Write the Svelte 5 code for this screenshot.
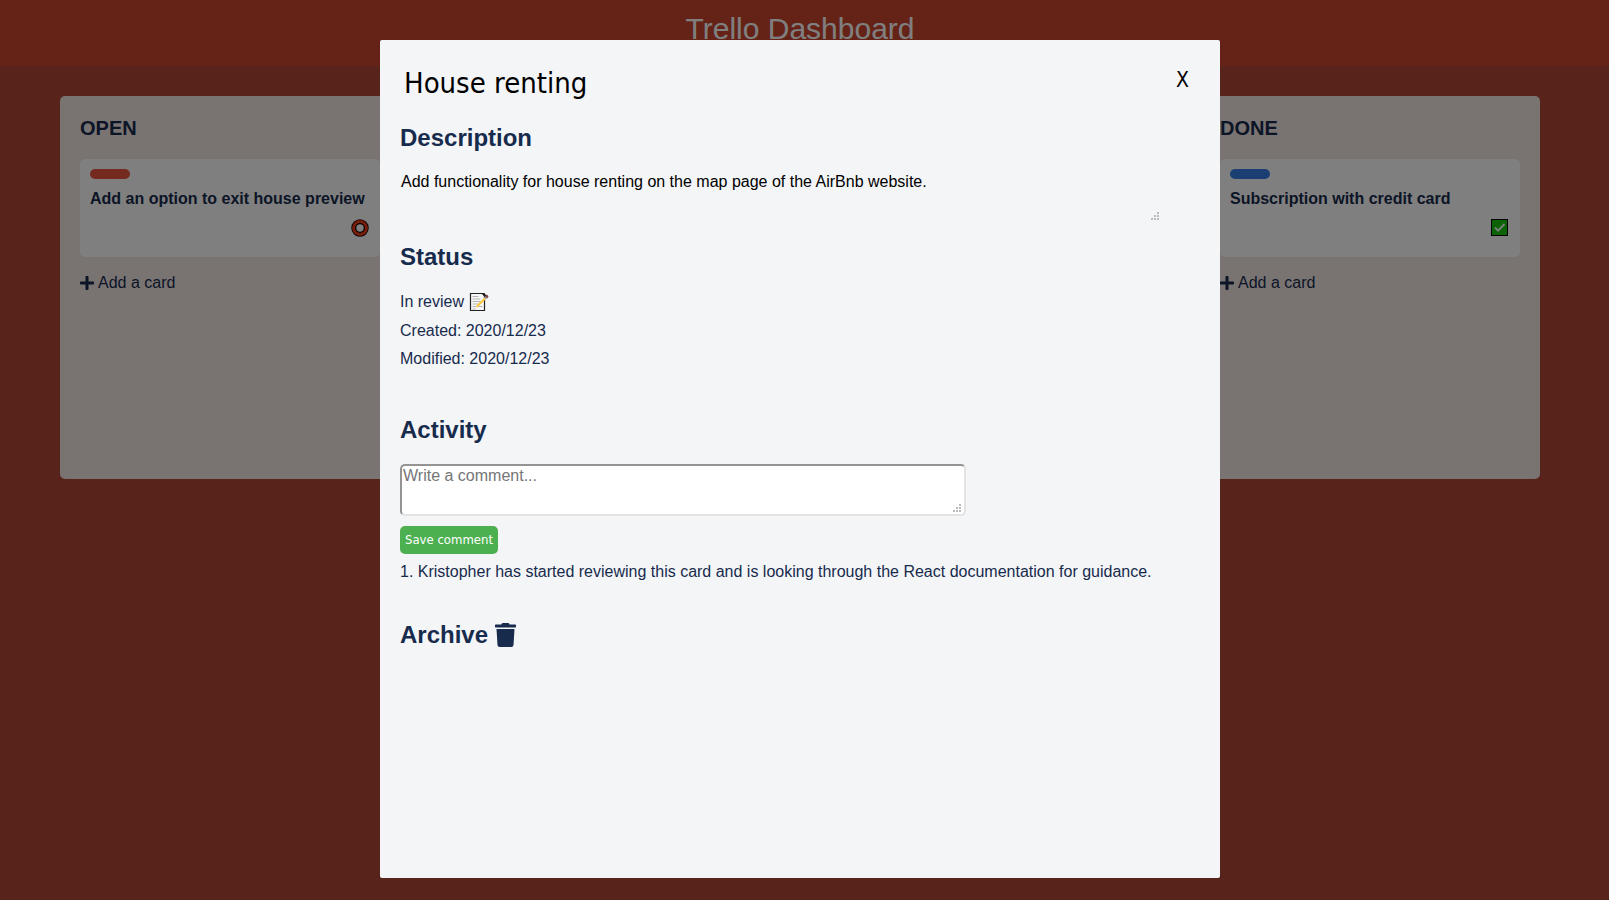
<script>
  const lists = [
    { title: 'OPEN', label: '#ea553f', card: 'Add an option to exit house preview', state: 'open' },
    { title: 'DONE', label: '#387fe6', card: 'Subscription with credit card', state: 'done' }
  ];
  let name = $state('House renting');
  let description = $state('Add functionality for house renting on the map page of the AirBnb website.');
  let comment = $state('');
</script>

{#snippet grip()}
  <svg class="grip" viewBox="0 0 8 8" aria-hidden="true">
    <path d="M6 0h2v2H6zM3 3h2v2H3zM6 3h2v2H6zM0 6h2v2H0zM3 6h2v2H3zM6 6h2v2H6z" fill="#b9babb" />
  </svg>
{/snippet}

<div class="page">
  <header><h1>Trello Dashboard</h1></header>
  <main class="board">
    {#each lists as list}
      <section class="list">
        <h2>{list.title}</h2>
        <article class="card">
          <div class="label" style="background: {list.label}"></div>
          <h3>{list.card}</h3>
          {#if list.state === 'open'}
            <svg class="state" viewBox="0 0 18 18" aria-hidden="true">
              <circle cx="9" cy="9" r="6.2" fill="none" stroke="#000" stroke-width="5" />
              <circle cx="9" cy="9" r="6.4" fill="none" stroke="#f03a17" stroke-width="3" />
            </svg>
          {:else}
            <svg class="state" viewBox="0 0 18 18" aria-hidden="true">
              <rect x=".5" y=".5" width="16" height="16" fill="#16c60c" stroke="#000" />
              <path d="M4 8.700l3 3L13.500 5" fill="none" stroke="#fff" stroke-width="1.800" />
            </svg>
          {/if}
        </article>
        <button class="add">
          <svg viewBox="0 0 448 512" aria-hidden="true"><path fill="currentColor" d="M416 208H272V64c0-17.700-14.300-32-32-32h-32c-17.700 0-32 14.300-32 32v144H32c-17.700 0-32 14.300-32 32v32c0 17.700 14.300 32 32 32h144v144c0 17.700 14.300 32 32 32h32c17.700 0 32-14.300 32-32V304h144c17.700 0 32-14.300 32-32v-32c0-17.700-14.300-32-32-32z" /></svg>
          Add a card
        </button>
      </section>
    {/each}
  </main>
</div>

<div class="overlay">
  <div class="modal" role="dialog" aria-modal="true" aria-label={name}>
    <div class="top">
      <input class="name" aria-label="Card title" bind:value={name} />
      <button class="close">X</button>
    </div>

    <h2><label for="description">Description</label></h2>
    <div class="field description">
      <textarea id="description" bind:value={description}></textarea>
      {@render grip()}
    </div>

    <h2>Status</h2>
    <div class="status">
      <p>
        In review
        <svg class="memo" viewBox="0 0 20 20" aria-hidden="true">
          <path d="M1.500 1.500h12l2 2v15h-14z" fill="#f8f8f8" stroke="#222" stroke-width="1.200" />
          <path d="M3.500 4.500h6M3.500 7h8M3.500 9.500h8M3.500 12h6M3.500 14.500h4M9.500 14.500h4M3.500 17h3" stroke="#b4b4b4" stroke-width="1" />
          <path d="M12.500 1h3l2 3-2 1z" fill="#222" />
          <path d="M7 15.500l1-2.500 7.500-7.500 1.400 1.400L9.500 14.500z" fill="#ffc83d" />
          <path d="M15 5.300l1.300-1.300 2 2L17 7.300z" fill="#9aa0a8" />
          <path d="M16.300 4c.7-1 1.600-1 2.200-.4s.6 1.500-.3 2.200z" fill="#c3423b" stroke="#222" stroke-width=".7" />
        </svg>
      </p>
      <p>Created: 2020/12/23</p>
      <p>Modified: 2020/12/23</p>
    </div>

    <h2><label for="comment">Activity</label></h2>
    <div class="field comment">
      <textarea id="comment" placeholder="Write a comment..." bind:value={comment}></textarea>
      {@render grip()}
    </div>
    <button class="save">Save comment</button>
    <p class="entry">1. Kristopher has started reviewing this card and is looking through the React documentation for guidance.</p>

    <h2 class="archive">
      <button>
        Archive
        <svg viewBox="0 0 448 512" aria-hidden="true"><path fill="currentColor" d="M432 32H312l-9.400-18.700A24 24 0 0 0 281.100 0H166.800a23.700 23.700 0 0 0-21.400 13.300L136 32H16A16 16 0 0 0 0 48v32a16 16 0 0 0 16 16h416a16 16 0 0 0 16-16V48a16 16 0 0 0-16-16zM53.200 467a48 48 0 0 0 47.900 45h245.800a48 48 0 0 0 47.900-45L416 128H32z" /></svg>
      </button>
    </h2>
  </div>
</div>

<style>
  :global(body) {
    margin: 0;
    background: #ae4636;
    color: #172b4d;
    font: 16px/20px "Liberation Sans", Arial, sans-serif;
  }
  h1, h2, h3, p { margin: 0; }
  button, input, textarea {
    box-sizing: border-box;
    margin: 0;
    padding: 0;
    border: 0;
    background: none;
    color: inherit;
    font: inherit;
  }
  button { cursor: pointer; }
  header {
    padding: 11px 9px 19px 0;
    background: #cb452d;
    color: #fff;
    text-align: center;
  }
  h1 { font-size: 30px; line-height: 36px; font-weight: 400; }
  .board {
    display: flex;
    justify-content: space-between;
    align-items: flex-start;
    padding: 30px 69px 30px 60px;
  }
  .list {
    box-sizing: border-box;
    width: 340px;
    min-height: 383px;
    padding: 20px;
    border-radius: 5px;
    background: #f3e8e5;
  }
  .list h2 { font-size: 20px; line-height: 24px; }
  .card {
    display: flex;
    flex-direction: column;
    margin-top: 19px;
    padding: 10px 10px 20px;
    border-radius: 5px;
    background: #fff;
  }
  .label { width: 40px; height: 10px; border-radius: 5px; }
  .card h3 { margin-top: 10px; font-size: 16px; line-height: 20px; }
  .state { width: 18px; height: 18px; margin: 10px 1px 0 0; align-self: flex-end; }
  .add { display: flex; align-items: center; gap: 4px; margin-top: 16px; }
  .add svg { width: 14px; height: 16px; }

  .overlay {
    position: fixed;
    inset: 0;
    box-sizing: border-box;
    padding: 40px 9px 22px 0;
    background: rgba(0, 0, 0, 0.5);
  }
  .modal {
    box-sizing: border-box;
    width: 840px;
    max-width: 100%;
    height: 100%;
    margin: 0 auto;
    padding: 20px;
    border-radius: 2px;
    background: #f4f5f7;
  }
  .modal h2 { font-size: 24px; line-height: 28px; }
  .top { display: flex; justify-content: space-between; align-items: flex-start; }
  .top, .save { font-family: "DejaVu Sans Condensed", Tahoma, sans-serif; }
  .name { width: 400px; height: 46px; padding: 0 4px; font-size: 29px; color: #000; }
  .close { padding: 8px 11px; font-size: 21px; line-height: 24px; color: #000; }
  .top + h2 { margin-top: 18px; }
  .field { position: relative; margin-top: 20px; }
  .field textarea { display: block; width: 100%; height: 100%; resize: none; }
  .grip { position: absolute; right: 5px; bottom: 4px; width: 8px; height: 8px; }
  .description { width: 764px; height: 52px; margin-bottom: 19px; }
  .description textarea { padding: 0 1px; color: #000; }
  .status { display: grid; gap: 8px; margin-top: 20px; margin-bottom: 47px; }
  .status p { display: flex; align-items: center; gap: 5px; }
  .memo { width: 20px; height: 22px; }
  .comment { width: 566px; height: 52px; }
  .comment textarea {
    padding: 0 1px;
    border: 2px solid;
    border-color: #949494 #e3e3e4 #e3e3e4 #949494;
    border-radius: 5px;
    background: #fff;
  }
  .comment textarea::placeholder { color: #757575; }
  .save {
    display: block;
    height: 28px;
    margin-top: 10px;
    padding: 0 5px;
    border-radius: 5px;
    background: #4caf50;
    color: #fff;
    font-size: 13px;
  }
  .entry { margin-top: 8px; }
  .archive { margin-top: 39px; }
  .archive button { display: flex; align-items: center; gap: 7px; }
  .archive svg { width: 21px; height: 24px; }
</style>
